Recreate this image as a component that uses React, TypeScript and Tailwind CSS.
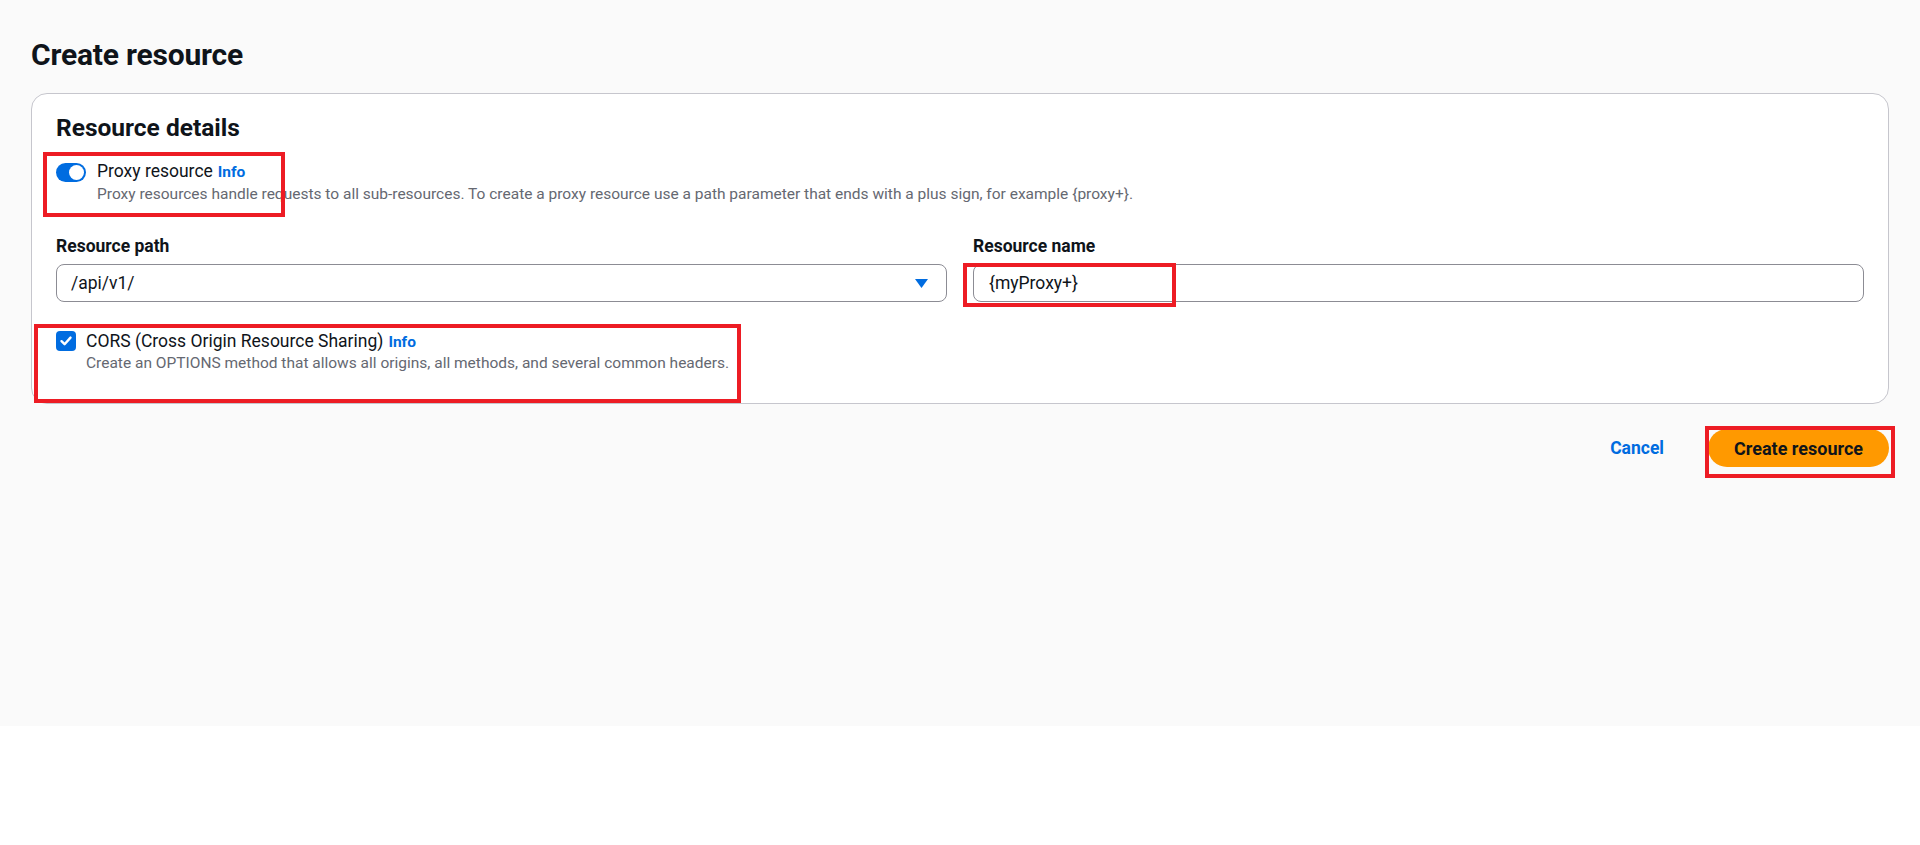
import React from "react";

function Toggle() {
  return (
    <span className="relative inline-block h-[19px] w-[30px] shrink-0 rounded-full bg-[#006ce0]">
      <span className="absolute right-[2px] top-[2px] h-[15px] w-[15px] rounded-full bg-white" />
    </span>
  );
}

function Checkbox() {
  return (
    <span className="flex h-[20px] w-[20px] shrink-0 items-center justify-center rounded-[4px] bg-[#006ce0]">
      <svg width="14" height="14" viewBox="0 0 14 14" fill="none">
        <path d="M2.5 7.2 L5.6 10.2 L11.5 3.6" stroke="white" strokeWidth="2.4" strokeLinecap="round" strokeLinejoin="round" />
      </svg>
    </span>
  );
}

export default function App() {
  return (
    <div
      className="relative min-h-[845px] bg-white text-[#0f141a]"
      style={{ fontFamily: "Roboto, 'Open Sans', Arial, sans-serif" }}
    >
      <div className="h-[726px] bg-[#fafafa] px-[31px] pt-[37px]">
        <h1 className="text-[30px] font-bold leading-[36px] tracking-[-0.2px]">Create resource</h1>

        <div className="mt-[20px] rounded-[16px] border border-[#c6c6cd] bg-white px-[24px] pb-[30px] pt-[19px]">
          <h2 className="text-[24.5px] font-bold leading-[30px]">Resource details</h2>

          <div className="mt-[17px] flex items-start gap-[11px]">
            <div className="pt-[3px]">
              <Toggle />
            </div>
            <div>
              <div className="flex items-baseline gap-[5px] leading-[22px]">
                <span className="text-[17.5px]">Proxy resource</span>
                <span className="text-[15.5px] font-bold text-[#006ce0]">Info</span>
              </div>
              <div className="mt-[1px] text-[15.5px] leading-[20px] text-[#656871]">
                Proxy resources handle requests to all sub-resources. To create a proxy resource use a path parameter that ends with a plus sign, for example {"{proxy+}"}.
              </div>
            </div>
          </div>

          <div className="mt-[31px] grid grid-cols-2 gap-[26px]">
            <div>
              <div className="text-[17.5px] font-bold leading-[22px]">Resource path</div>
              <div className="mt-[7px] flex h-[38px] items-center justify-between rounded-[8px] border border-[#8c8c94] bg-white pl-[14px] pr-[18px]">
                <span className="text-[17.5px]">/api/v1/</span>
                <svg width="13" height="9" viewBox="0 0 13 9">
                  <path d="M0 0 L13 0 L6.5 9 Z" fill="#006ce0" />
                </svg>
              </div>
            </div>
            <div>
              <div className="text-[17.5px] font-bold leading-[22px]">Resource name</div>
              <div className="mt-[7px] flex h-[38px] items-center rounded-[8px] border border-[#8c8c94] bg-white pl-[15px]">
                <span className="text-[17.5px]">{"{myProxy+}"}</span>
              </div>
            </div>
          </div>

          <div className="mt-[28px] flex items-start gap-[10px]">
            <div className="pt-[1px]">
              <Checkbox />
            </div>
            <div>
              <div className="flex items-baseline gap-[5px] leading-[22px]">
                <span className="text-[17.5px]">CORS (Cross Origin Resource Sharing)</span>
                <span className="text-[15.5px] font-bold text-[#006ce0]">Info</span>
              </div>
              <div className="text-[15.5px] leading-[20px] text-[#656871]">
                Create an OPTIONS method that allows all origins, all methods, and several common headers.
              </div>
            </div>
          </div>
        </div>

        <div className="mt-[25px] flex items-center justify-end gap-[44px]">
          <span className="text-[17.5px] font-bold text-[#006ce0]">Cancel</span>
          <span className="flex h-[38px] items-center rounded-full bg-[#ff9900] px-[26px] text-[18px] font-bold text-[#0f141a]">
            Create resource
          </span>
        </div>
      </div>

      {/* annotation boxes */}
      <div className="pointer-events-none absolute left-[43px] top-[152px] h-[65px] w-[242px] border-[4px] border-[#ed1c24]" />
      <div className="pointer-events-none absolute left-[963px] top-[263px] h-[44px] w-[213px] border-[4px] border-[#ed1c24]" />
      <div className="pointer-events-none absolute left-[34px] top-[324px] h-[79px] w-[707px] border-[4px] border-[#ed1c24]" />
      <div className="pointer-events-none absolute left-[1705px] top-[426px] h-[52px] w-[190px] border-[4px] border-[#ed1c24]" />
    </div>
  );
}
